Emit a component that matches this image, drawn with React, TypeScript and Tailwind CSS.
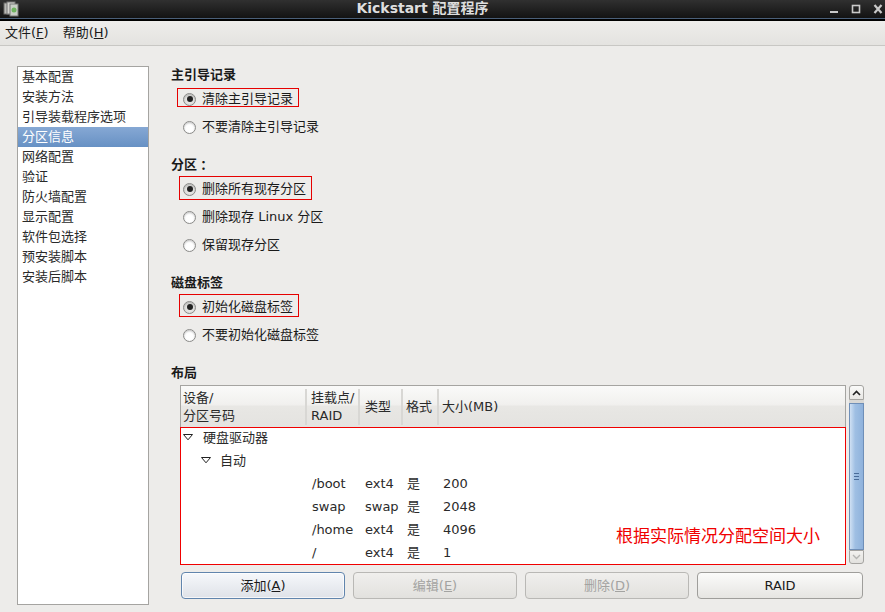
import React from "react";

const sidebar = ["基本配置", "安装方法", "引导装载程序选项", "分区信息", "网络配置", "验证", "防火墙配置", "显示配置", "软件包选择", "预安装脚本", "安装后脚本"];

function Radio({ checked }: { checked?: boolean }) {
  return (
    <span className={"w-[13px] h-[13px] rounded-full border border-[#8a8a88] flex items-center justify-center shrink-0 shadow-[inset_0_1px_2px_rgba(0,0,0,0.25)] " + (checked ? "bg-[#e4e4e2]" : "bg-white")}>
      {checked && <span className="w-[6px] h-[6px] rounded-full bg-[#222]" />}
    </span>
  );
}

function Option({ label, checked, box }: { label: string; checked?: boolean; box?: string }) {
  return (
    <div className="relative h-[28px] flex items-center pl-[12px] gap-[6px] text-[13px] text-[#1a1a1a]">
      {box && <span className={"absolute border border-[#e60000] " + box} />}
      <Radio checked={checked} />
      <span>{label}</span>
    </div>
  );
}

function Heading({ children, className = "" }: { children: React.ReactNode; className?: string }) {
  return <div className={"h-[20px] flex items-center font-bold text-[13px] text-[#1a1a1a] " + className}>{children}</div>;
}

function HeaderCell({ className, children }: { className: string; children: React.ReactNode }) {
  return <div className={"h-[36px] self-center flex items-center border-r-2 border-[#d8d7d4] leading-[18px] text-[#2a2a2a] " + className}>{children}</div>;
}

function Chevron() {
  return (
    <svg width="10" height="7" viewBox="0 0 10 7" className="shrink-0">
      <path d="M0.5 0.5H9.5L5 5.8Z" fill="#fff" stroke="#222" strokeWidth="1" />
    </svg>
  );
}

function DataRow({ a, b, c, d }: { a: string; b: string; c: string; d: string }) {
  return (
    <div className="h-[23px] flex items-center text-[13px] text-[#2a2a2a]">
      <span className="w-[131px]" />
      <span className="w-[53px]">{a}</span>
      <span className="w-[42px]">{b}</span>
      <span className="w-[36px]">{c}</span>
      <span>{d}</span>
    </div>
  );
}

function Btn({ children, kind, className = "" }: { children: React.ReactNode; kind?: "focus" | "off"; className?: string }) {
  const style =
    kind === "focus"
      ? "border-[#6185ad] bg-gradient-to-b from-[#f6f8fb] to-[#dfe2e8] text-[#1a1a1a] shadow-[inset_0_0_0_1px_rgba(255,255,255,0.7)]"
      : kind === "off"
      ? "border-[#b9b8b5] bg-gradient-to-b from-[#f0efed] to-[#e2e1de] text-[#a3a3a1]"
      : "border-[#9f9e9b] bg-gradient-to-b from-[#fbfbfa] to-[#e6e5e2] text-[#1a1a1a]";
  return <div className={"h-[27px] rounded-[4px] border flex items-center justify-center text-[13px] " + style + " " + className}>{children}</div>;
}

export default function App() {
  return (
    <div className="w-[885px] h-[612px] overflow-hidden flex flex-col bg-[#edecea] font-['DejaVu_Sans','Noto_Sans_CJK_SC',sans-serif] text-[13px]">
      {/* Title bar */}
      <div className="h-[21px] shrink-0 relative flex items-center justify-center bg-[linear-gradient(#303030,#131313_85%,#4a5f78_86%,#4a5f78_90%,#000_91%)]">
        <svg width="16" height="16" viewBox="0 0 16 16" className="absolute left-[3px] top-[1px]">
          <rect x="1" y="2" width="8" height="11" fill="#b9b9b5" stroke="#6b6b68" />
          <rect x="4" y="1" width="8" height="12" fill="#d5d5d0" stroke="#777" />
          <rect x="7" y="3" width="8" height="12" fill="#c9cfc6" stroke="#777" />
          <circle cx="11" cy="9" r="2.5" fill="#6fb35f" />
        </svg>
        <span className="font-bold text-[14px] text-[#dedede] -mt-[4px] mr-[40px]">Kickstart 配置程序</span>
        <svg width="56" height="12" viewBox="0 0 56 12" className="absolute left-[829px] top-[3px]">
          <rect x="1" y="8" width="8" height="2" fill="#c9c9c9" />
          <rect x="23.5" y="2.5" width="7" height="7" fill="none" stroke="#c9c9c9" strokeWidth="1.6" />
          <path d="M45.5 2L52.5 10M52.5 2L45.5 10" stroke="#c9c9c9" strokeWidth="2.2" />
        </svg>
      </div>

      {/* Menu bar */}
      <div className="h-[25px] shrink-0 flex items-center gap-[14px] pl-[5px] border-b border-[#c8c7c4] bg-gradient-to-b from-[#eeedeb] to-[#e4e3e0] text-[#1a1a1a]">
        <span>文件(<span className="underline">F</span>)</span>
        <span>帮助(<span className="underline">H</span>)</span>
      </div>

      {/* Body */}
      <div className="flex-1 flex min-h-0 pl-[17px] pt-[20px] pb-[7px]">
        <div className="w-[132px] shrink-0 bg-white border border-[#a5a4a1] text-[#2a2a2a]">
          {sidebar.map((s) => (
            <div
              key={s}
              className={
                "h-[20px] flex items-center pl-[4px] " +
                (s === "分区信息" ? "bg-gradient-to-b from-[#86a8d4] to-[#6791c4] text-white" : "")
              }
            >
              {s}
            </div>
          ))}
        </div>

        <div className="w-[693px] ml-[22px] -mt-[1px] flex flex-col relative">
          <Heading>主引导记录</Heading>
          <Option label="清除主引导记录" checked box="left-[6px] top-[3px] w-[122px] h-[19px]" />
          <Option label="不要清除主引导记录" />

          <Heading className="mt-[14px]">
            <span>分区</span>
            <span className="font-['Noto_Sans_CJK_TC']">：</span>
          </Heading>
          <Option label="删除所有现存分区" checked box="left-[8px] top-[1px] w-[133px] h-[24px]" />
          <Option label="删除现存 Linux 分区" />
          <Option label="保留现存分区" />

          <Heading className="mt-[14px]">磁盘标签</Heading>
          <Option label="初始化磁盘标签" checked box="left-[8px] top-[1px] w-[120px] h-[23px]" />
          <Option label="不要初始化磁盘标签" />

          <Heading className="mt-[14px]">布局</Heading>

          <div className="mt-[2px] ml-[9px] flex gap-[3px]">
            {/* Table */}
            <div className="relative w-[667px] h-[180px] border-x border-t border-[#a5a4a1] flex flex-col">
              <div className="h-[41px] shrink-0 flex bg-[linear-gradient(#fafaf9,#f1f0ee_45%,#e8e7e4_50%,#e4e3e0)]">
                <HeaderCell className="w-[126px] pl-[2px]"><span>设备/<br />分区号码</span></HeaderCell>
                <HeaderCell className="w-[53px] pl-[4px]"><span>挂载点/<br />RAID</span></HeaderCell>
                <HeaderCell className="w-[43px] pl-[5px]">类型</HeaderCell>
                <HeaderCell className="w-[36px] pl-[3px]">格式</HeaderCell>
                <div className="h-[36px] self-center flex items-center pl-[3px] text-[#2a2a2a]">大小(MB)</div>
              </div>
              <div className="flex-1 bg-white border border-[#f00000] -ml-px -mr-px">
                <div className="h-[23px] -mt-[2px] flex items-center pl-[2px] gap-[10px] text-[#2a2a2a]"><Chevron /><span>硬盘驱动器</span></div>
                <div className="h-[23px] flex items-center pl-[20px] gap-[9px] text-[#2a2a2a]"><Chevron /><span>自动</span></div>
                <DataRow a="/boot" b="ext4" c="是" d="200" />
                <DataRow a="swap" b="swap" c="是" d="2048" />
                <DataRow a="/home" b="ext4" c="是" d="4096" />
                <DataRow a="/" b="ext4" c="是" d="1" />
              </div>
              <span className="absolute left-[435px] top-[138px] text-[17px] text-[#f00000] leading-[24px]">根据实际情况分配空间大小</span>
            </div>

            {/* Scrollbar */}
            <div className="w-[15px] h-[179px] flex flex-col">
              <div className="h-[15px] rounded-t-[3px] border border-[#a5a4a1] bg-gradient-to-b from-[#fafaf9] to-[#e8e7e4] flex items-center justify-center">
                <svg width="9" height="6" viewBox="0 0 9 6"><path d="M1 5L4.5 1.5L8 5" fill="none" stroke="#222" strokeWidth="1.6" /></svg>
              </div>
              <div className="h-[3px] bg-[#d9d8d5]" />
              <div className="h-[147px] border border-[#6f8fb8] bg-[linear-gradient(90deg,#cfe0f3,#9fbfe3_40%,#8fb2dc)] flex flex-col items-center justify-center gap-[2px]">
                <span className="w-[5px] h-px bg-[#4a6c99]" />
                <span className="w-[5px] h-px bg-[#4a6c99]" />
                <span className="w-[5px] h-px bg-[#4a6c99]" />
              </div>
              <div className="h-[14px] rounded-b-[3px] border border-[#a5a4a1] bg-gradient-to-b from-[#f3f2f0] to-[#e2e1de] flex items-center justify-center">
                <svg width="9" height="6" viewBox="0 0 9 6"><path d="M1 1L4.5 4.5L8 1" fill="none" stroke="#b5b5b3" strokeWidth="1.4" /></svg>
              </div>
            </div>
          </div>

          {/* Buttons */}
          <div className="mt-[7px] ml-[10px] grid grid-cols-[164px_164px_164px_166px] gap-[8px]">
            <Btn kind="focus">添加(<span className="underline">A</span>)</Btn>
            <Btn kind="off">编辑(<span className="underline">E</span>)</Btn>
            <Btn kind="off">删除(<span className="underline">D</span>)</Btn>
            <Btn>RAID</Btn>
          </div>
        </div>
      </div>
    </div>
  );
}
